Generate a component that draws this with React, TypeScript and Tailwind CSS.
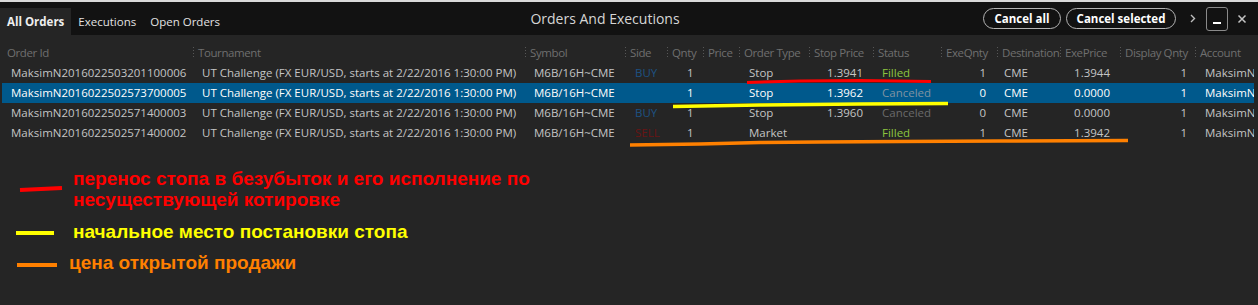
type Order = {
  id: string;
  side: "" | "BUY" | "SELL";
  qty: string;
  type: string;
  stop: string;
  status: "Filled" | "Canceled";
  exeQty: string;
  exePrice: string;
  selected?: boolean;
};

const orders: Order[] = [
  { id: "MaksimN2016022503201100006", side: "BUY", qty: "1", type: "Stop", stop: "1.3941", status: "Filled", exeQty: "1", exePrice: "1.3944" },
  { id: "MaksimN2016022502573700005", side: "", qty: "1", type: "Stop", stop: "1.3962", status: "Canceled", exeQty: "0", exePrice: "0.0000", selected: true },
  { id: "MaksimN2016022502571400003", side: "BUY", qty: "1", type: "Stop", stop: "1.3960", status: "Canceled", exeQty: "0", exePrice: "0.0000" },
  { id: "MaksimN2016022502571400002", side: "SELL", qty: "1", type: "Market", stop: "", status: "Filled", exeQty: "1", exePrice: "1.3942" },
];

const cols = "grid grid-cols-[191px_332px_100px_42px_36px_36px_70px_64px_68px_56px_63px_60px_75px_59px]";

const headers = [
  "Order Id", "Tournament", "Symbol", "Side", "Qnty", "Price", "Order Type",
  "Stop Price", "Status", "ExeQnty", "Destination", "ExePrice", "Display Qnty", "Account",
];

const HeaderCell = ({ label, first }: { label: string; first: boolean }) => (
  <div className="relative flex items-center overflow-hidden whitespace-nowrap pl-[5px]">
    {!first && (
      <span className="absolute left-0 top-[5px] h-[11px] w-px bg-[repeating-linear-gradient(to_bottom,#575757_0_1px,transparent_1px_3px)]" />
    )}
    {label}
  </div>
);

const Row = ({ o }: { o: Order }) => (
  <div className={`${cols} h-[20px] items-center whitespace-nowrap ${o.selected ? "bg-[#00598c] text-white" : "text-[#c4c4c4]"}`}>
    <div className="pl-[9px]">{o.id}</div>
    <div className="pl-[9px]">UT Challenge (FX EUR/USD, starts at 2/22/2016 1:30:00 PM)</div>
    <div className="pl-[9px]">M6B/16H~CME</div>
    <div className={`pl-[10px] ${o.side === "SELL" ? "text-[#6a1414]" : "text-[#1d5283]"}`}>{o.side}</div>
    <div className="pl-[20px]">{o.qty}</div>
    <div />
    <div className="pl-[10px]">{o.type}</div>
    <div className="pr-[10px] text-right">{o.stop}</div>
    <div
      className={`pl-[9px] ${
        o.status === "Filled" ? "text-[#8dc63f]" : o.selected ? "text-[#7f93a2]" : "text-[#6a6a6a]"
      }`}
    >
      {o.status}
    </div>
    <div className="pr-[11px] text-right">{o.exeQty}</div>
    <div className="pl-[7px]">CME</div>
    <div className="pr-[10px] text-right">{o.exePrice}</div>
    <div className="pr-[8px] text-right">1</div>
    <div className="overflow-hidden pl-[10px]">MaksimN</div>
  </div>
);

const Dash = ({ color, w, tilt = 0 }: { color: string; w: number; tilt?: number }) => (
  <svg width={w + 2} height="8" className="block">
    <line x1="1" y1={4 + tilt} x2={w + 1} y2={4 - tilt} stroke={color} strokeWidth="4" />
  </svg>
);

export default function App() {
  return (
    <div className="relative h-[305px] w-[1258px] overflow-hidden bg-[#252525] font-['Open_Sans',sans-serif] text-[11.5px]">
      <div className="h-[2px] bg-[#d9d9d9]" />

      {/* title bar */}
      <div className="flex h-[33px] items-stretch bg-[#121212]">
        <div className="flex items-end">
          <div className="flex h-[27px] items-center bg-[#252525] px-[7px] font-bold text-[#eeeeee]">All Orders</div>
          <div className="flex h-[27px] items-center px-[7px] text-[#e2e2e2]">Executions</div>
          <div className="flex h-[27px] items-center px-[7px] text-[#e2e2e2]">Open Orders</div>
        </div>
        <div className="flex flex-1 items-center justify-center text-[14px] text-[#d6d6d6]">Orders And Executions</div>
        <div className="flex items-center pr-[11px]">
          <button className="h-[21px] w-[78px] rounded-full border border-[#b5b5b5] font-bold text-white">Cancel all</button>
          <button className="ml-[5px] h-[21px] w-[110px] rounded-full border border-[#b5b5b5] font-bold text-white">Cancel selected</button>
          <svg width="6" height="9" className="ml-[14px]">
            <polyline points="1,1 4.5,4.5 1,8" fill="none" stroke="#bdbdbd" strokeWidth="1.4" />
          </svg>
          <div className="ml-[10px] flex h-[24px] w-[22px] items-end justify-center rounded-[3px] border border-[#8a8a8a] pb-[6px]">
            <span className="block h-[2px] w-[8px] bg-white" />
          </div>
          <svg width="10" height="10" className="ml-[9px]">
            <path d="M1.5 1.5 L8.5 8.5 M8.5 1.5 L1.5 8.5" stroke="#c4c4c4" strokeWidth="1.5" />
          </svg>
        </div>
      </div>

      {/* table */}
      <div className="w-[1254px] pl-[2px] pt-[7px]">
        <div className={`${cols} h-[21px] tracking-[-0.4px] text-[#6f6f6f]`}>
          {headers.map((h, i) => (
            <HeaderCell key={h} label={h} first={i === 0} />
          ))}
        </div>
        {orders.map((o) => (
          <Row key={o.id} o={o} />
        ))}
      </div>

      {/* legend */}
      <div className="mt-[25px] flex flex-col font-['Liberation_Sans',Arial,sans-serif] text-[19px] font-bold leading-[21px]">
        <div className="flex">
          <div className="w-[73px] pl-[19px] pt-[17px]">
            <Dash color="#ff0000" w={42} tilt={1} />
          </div>
          <p className="text-[#ff0000]">
            перенос стопа в безубыток и его исполнение по
            <br />
            несуществующей котировке
          </p>
        </div>
        <div className="mt-[11px] flex">
          <div className="w-[73px] pl-[15px] pt-[8px]">
            <Dash color="#ffff00" w={38} />
          </div>
          <p className="text-[#ffff00]">начальное место постановки стопа</p>
        </div>
        <div className="mt-[10px] flex">
          <div className="w-[69px] pl-[16px] pt-[9px]">
            <Dash color="#ff8000" w={40} />
          </div>
          <p className="text-[#ff8000]">цена открытой продажи</p>
        </div>
      </div>

      {/* hand-drawn marks over the table */}
      <svg className="pointer-events-none absolute left-0 top-0" width="1258" height="305">
        <polyline points="747,82.5 800,81 860,80.5 931,81.5" fill="none" stroke="#ff0000" strokeWidth="3" />
        <polyline points="673,106.5 760,105 860,104 948,103.5" fill="none" stroke="#ffff00" strokeWidth="3.5" />
        <polyline
          points="630,145 700,144 760,142.5 820,142 900,141.5 1000,141 1128,140.5"
          fill="none"
          stroke="#ff8000"
          strokeWidth="3.5"
        />
      </svg>
    </div>
  );
}
